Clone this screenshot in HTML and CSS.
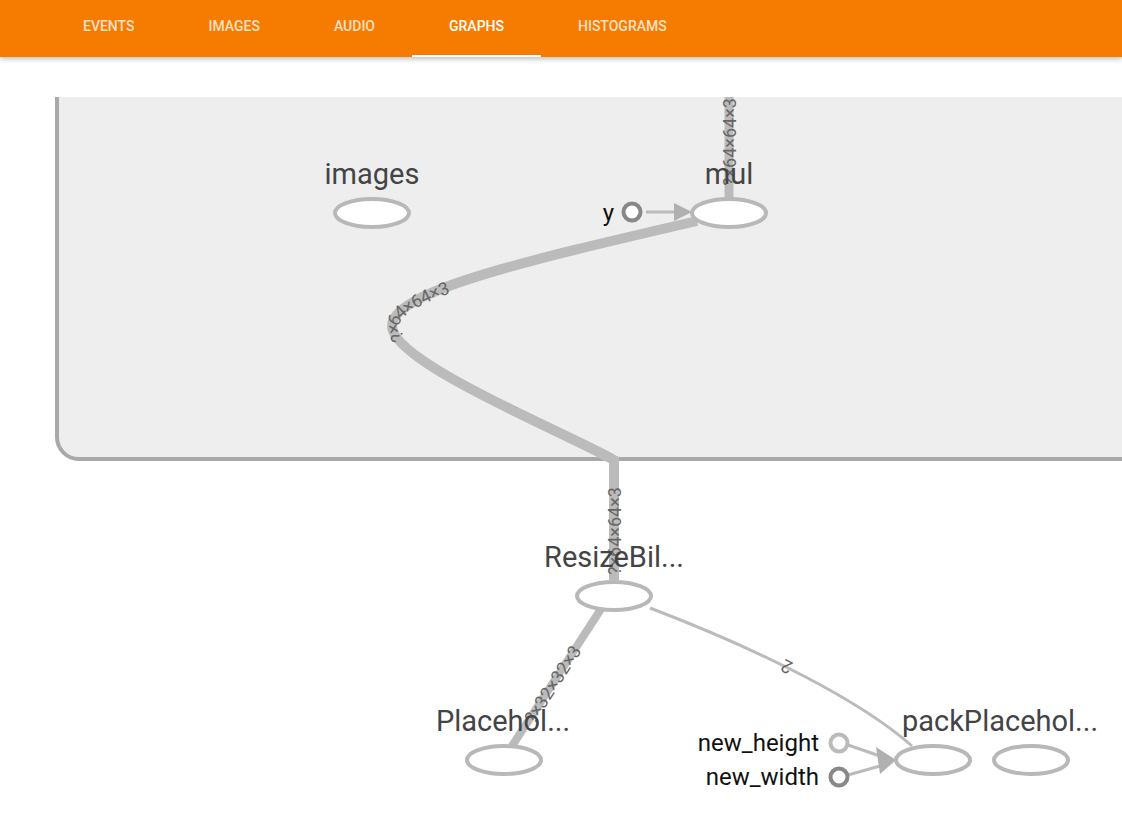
FILE: index.html
```html
<!DOCTYPE html>
<html>
<head>
<meta charset="utf-8">
<link rel="stylesheet" href="styles.css">
</head>
<body>
<header class="toolbar">
  <nav class="tabs">
    <div class="tab">EVENTS</div>
    <div class="tab">IMAGES</div>
    <div class="tab">AUDIO</div>
    <div class="tab active">GRAPHS</div>
    <div class="tab">HISTOGRAMS</div>
  </nav>
</header>
<main class="board">
  <svg class="graph" width="1122" height="725" viewBox="0 97 1122 725" xmlns="http://www.w3.org/2000/svg">
    <defs>
      <path id="e-mul-top" d="M729,200 L729,60"/>
      <path id="e-curve-rev" d="M614,460 C560,430 392,362 392,326 C392,292 520,262 697,221"/>
      <path id="e-ph" d="M512,746 L602,607"/>
      <path id="e-pack-rev" d="M912,746 C860,700 760,650 650,608"/>
      <path id="e-resize" d="M614,577 L614,440"/>
    </defs>

    <rect class="group" x="57" y="40" width="1120" height="419" rx="22" ry="22"/>

    <!-- edges -->
    <path class="edge thick" d="M729,97 L729,199"/>
    <path class="edge thick2" d="M697,221 C520,262 392,292 392,326 C392,362 560,430 614,460 L614,580"/>
    <path class="edge med" d="M601,609 L512,746"/>
    <path class="edge thin" d="M650,608 C760,650 860,700 912,746"/>
    <path class="edge thin" d="M646,212 L676,212"/>
    <polygon class="arrow" points="674,203 692,212 674,221"/>
    <path class="edge thin" d="M848,745 L880,756"/>
    <path class="edge thin" d="M848,775 L880,766"/>
    <polygon class="arrow" points="876,747 896,760 880,774"/>

    <!-- edge labels -->
    <text class="elabel"><textPath href="#e-mul-top" startOffset="14">?×64×64×3</textPath></text>
    <text class="elabel"><textPath href="#e-curve-rev" startOffset="247">?×64×64×3</textPath></text>
    <text class="elabel"><textPath href="#e-resize" startOffset="2">?×64×64×3</textPath></text>
    <text class="elabel"><textPath href="#e-ph" startOffset="30">?×32×32×3</textPath></text>
    <text class="elabel"><textPath href="#e-pack-rev" startOffset="144">2</textPath></text>

    <!-- nodes -->
    <ellipse class="node" cx="372" cy="213" rx="37" ry="14"/>
    <ellipse class="node" cx="729" cy="213" rx="37" ry="14"/>
    <ellipse class="node" cx="614" cy="596" rx="37" ry="14"/>
    <ellipse class="node" cx="504" cy="760" rx="37" ry="14"/>
    <ellipse class="node" cx="933" cy="760" rx="37" ry="14"/>
    <ellipse class="node" cx="1031" cy="760" rx="37" ry="14"/>

    <circle class="port dark" cx="632" cy="212" r="8.5"/>
    <circle class="port light" cx="839" cy="743" r="8.5"/>
    <circle class="port dark" cx="839" cy="777" r="8.5"/>

    <!-- node labels -->
    <text class="nlabel" x="372" y="184">images</text>
    <text class="nlabel" x="729" y="184">mul</text>
    <text class="nlabel" x="614" y="567">ResizeBil...</text>
    <text class="nlabel" x="503" y="731">Placehol...</text>
    <text class="nlabel" x="1000" y="731">packPlacehol...</text>

    <text class="plabel" x="614" y="221">y</text>
    <text class="plabel" x="819" y="751">new_height</text>
    <text class="plabel" x="819" y="785">new_width</text>
  </svg>
</main>
</body>
</html>
```

FILE: styles.css
```css
html, body {
  margin: 0;
  padding: 0;
  background: #ffffff;
  font-family: Roboto, "Noto Sans", sans-serif;
  overflow: hidden;
}

.toolbar {
  height: 57px;
  background: #f57c00;
  box-shadow: 0 2px 5px rgba(0, 0, 0, 0.26);
  position: relative;
  z-index: 1;
}

.tabs {
  display: flex;
  height: 100%;
  padding-left: 46px;
}

.tab {
  display: flex;
  align-items: center;
  padding: 0 37px 6px;
  font-size: 14px;
  font-weight: 500;
  color: rgba(255, 255, 255, 0.78);
  box-sizing: border-box;
  height: 100%;
}

.tab.active {
  color: #ffffff;
  box-shadow: inset 0 -2px 0 #ffffff;
}

.board {
  height: 765px;
  padding-top: 40px;
  box-sizing: border-box;
  overflow: hidden;
}

.graph {
  display: block;
}

.group {
  fill: #eeeeee;
  stroke: #a9a9a9;
  stroke-width: 4;
}

.edge {
  fill: none;
  stroke: #bbbbbb;
}

.edge.thick { stroke-width: 9; }
.edge.thick2 { stroke-width: 10; }
.edge.med { stroke-width: 8; }
.edge.thin { stroke-width: 3; }

.arrow {
  fill: #b0b0b0;
}

.node {
  fill: #ffffff;
  stroke: #b8b8b8;
  stroke-width: 4;
}

.port {
  fill: #ffffff;
  stroke-width: 4;
}

.port.dark { stroke: #888888; }
.port.light { stroke: #bbbbbb; }

.nlabel {
  font-family: Roboto, sans-serif;
  font-size: 29px;
  fill: #444444;
  text-anchor: middle;
}

.plabel {
  font-family: Roboto, sans-serif;
  font-size: 24px;
  fill: #111111;
  text-anchor: end;
}

.elabel {
  font-family: Roboto, sans-serif;
  font-size: 18px;
  fill: #666666;
  dominant-baseline: central;
}
```
